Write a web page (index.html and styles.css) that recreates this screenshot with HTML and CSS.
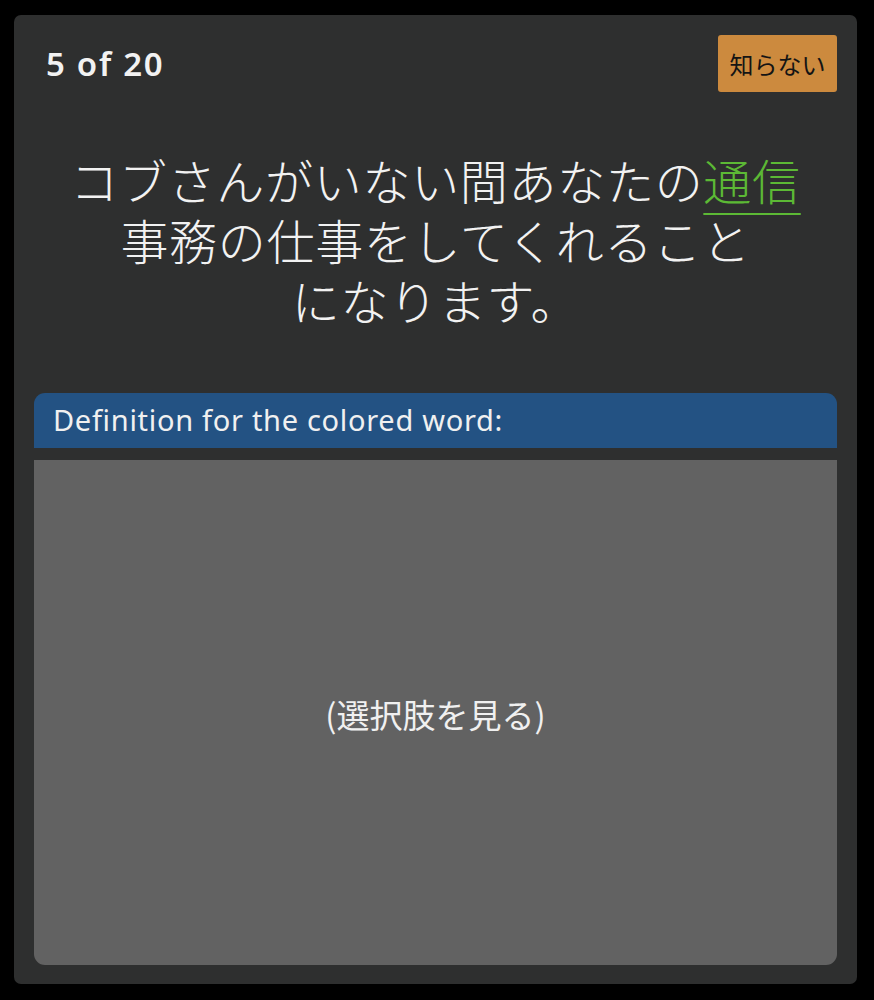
FILE: index.html
```html
<!DOCTYPE html>
<html lang="ja">
<head>
<meta charset="utf-8">
<link rel="stylesheet" href="styles.css">
</head>
<body>
<div class="card">
  <div class="top">
    <div class="count">5 of 20</div>
    <button class="skip">知らない</button>
  </div>
  <div class="sentence">コブさんがいない間あなたの<span class="target">通信</span><br>事務の仕事をしてくれること<br>になります。</div>
  <div class="def-head">Definition for the colored word:</div>
  <div class="def-body">(選択肢を見る)</div>
</div>
</body>
</html>
```
FILE: styles.css
```css
html, body {
  margin: 0;
  padding: 0;
  background: #000;
}
body {
  padding: 15px 17px 16px 14px;
  font-family: "Noto Sans CJK JP", "Noto Sans", sans-serif;
  color: #f2f2f2;
}
.card {
  background: #2e2f2f;
  border-radius: 7px;
  height: 969px;
  box-sizing: border-box;
  padding: 20px 20px 19px 20px;
  display: flex;
  flex-direction: column;
}
.top {
  display: flex;
  justify-content: space-between;
  align-items: flex-start;
  padding-left: 12px;
}
.count {
  font-family: "Noto Sans", "Open Sans", sans-serif;
  font-weight: 600;
  font-size: 33px;
  letter-spacing: 1.7px;
  line-height: 58px;
  color: #f2f2f2;
}
.skip {
  background: #cc8a3e;
  border: none;
  border-radius: 3px;
  width: 119px;
  height: 57px;
  padding: 0;
  font-family: "Noto Sans CJK JP", sans-serif;
  font-size: 24px;
  color: #141414;
}
.sentence {
  margin-top: 56px;
  text-align: center;
  font-size: 48px;
  letter-spacing: 0.7px;
  line-height: 60px;
  font-weight: 300;
  color: #f2f2f2;
}
.target {
  color: #5cb935;
  text-decoration: underline;
  text-decoration-thickness: 2px;
  text-underline-offset: 13px;
  text-decoration-color: #5cb935;
}
.def-head {
  margin-top: 64px;
  background: #235283;
  border-radius: 11px 11px 0 0;
  height: 55px;
  box-sizing: border-box;
  padding-left: 19px;
  font-family: "Noto Sans", "Open Sans", sans-serif;
  font-size: 29px;
  letter-spacing: 0.7px;
  line-height: 54px;
  color: #f0f0f0;
}
.def-body {
  margin-top: 12px;
  flex: 1;
  background: #626262;
  border-radius: 0 0 11px 11px;
  display: flex;
  align-items: center;
  justify-content: center;
  font-size: 33px;
  color: #f0f0f0;
  padding-top: 2px;
}
```
